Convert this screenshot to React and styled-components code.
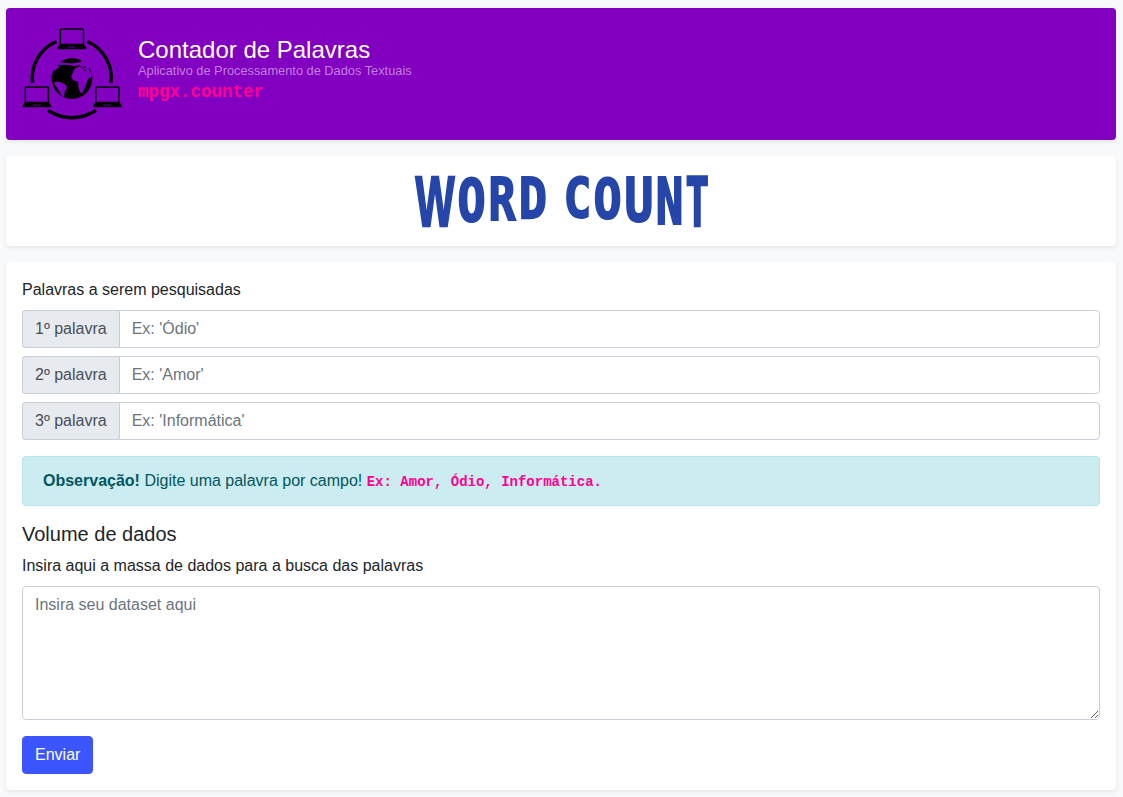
import React from "react";
import styled, { createGlobalStyle } from "styled-components";

const GlobalStyle = createGlobalStyle`
  *, *::before, *::after { box-sizing: border-box; }
  html { background: #f8f9fb; }
  body {
    margin: 0;
    background: #f8f9fb;
    color: #212529;
    font: 400 16px/24px "Liberation Sans", Arial, sans-serif;
  }
`;

const Page = styled.main`
  display: flex;
  flex-direction: column;
  gap: 16px;
  padding: 8px 7px 7px 6px;
`;

const Card = styled.section`
  padding: 16px;
  border-radius: 4px;
  background: #fff;
  box-shadow: 0 2px 4px rgba(0, 0, 0, 0.075);
`;

const Banner = styled(Card).attrs({ as: "header" })`
  display: flex;
  gap: 16px;
  height: 132px;
  background: #8200c0;
  color: #fff;
`;

const BannerText = styled.div`
  display: flex;
  flex-direction: column;
  padding-top: 11px;
`;

const AppName = styled.h1`
  margin: 0;
  font-size: 24px;
  font-weight: 400;
  line-height: 29px;
`;

const Tagline = styled.small`
  margin-bottom: 2px;
  font-size: 12.8px;
  line-height: 14px;
  color: #c17fdf;
`;

const Code = styled.code`
  font-family: "Liberation Mono", monospace;
  font-size: ${(p) => p.$size || "14px"};
  font-weight: 700;
  color: #ff0090;
`;

const LogoCard = styled(Card)`
  display: flex;
  justify-content: center;
  height: 90px;
`;

const LogoSvg = styled.svg`
  overflow: visible;
`;

const LogoLetter = styled.text`
  font: 700 60px ${(p) => p.$font || '"DejaVu Sans Mono"'}, sans-serif;
  fill: #2546a8;
  stroke: #2546a8;
  stroke-width: 2;
`;

const FormCard = styled(Card).attrs({ as: "form" })`
  display: flex;
  flex-direction: column;
  height: 528px;
`;

const Label = styled.label`
  margin-bottom: 8px;
  line-height: 24px;
`;

const Fields = styled.div`
  display: flex;
  flex-direction: column;
  gap: 8px;
`;

const InputGroup = styled.div`
  display: flex;
  height: 38px;
`;

const Addon = styled.span`
  padding: 6px 12px;
  border: 1px solid #c9cfd9;
  border-right: 0;
  border-radius: 4px 0 0 4px;
  background: #e7eaef;
  color: #495057;
  white-space: nowrap;
`;

const Input = styled.input`
  flex: 1;
  min-width: 0;
  padding: 6px 12px;
  border: 1px solid #c9cfd9;
  border-radius: 0 4px 4px 0;
  background: #fff;
  font: inherit;
  outline: 0;
  &::placeholder { color: #6c757d; opacity: 1; }
`;

const Notice = styled.div`
  height: 50px;
  margin: 16px 0;
  padding: 12px 20px;
  border: 1px solid #b6e5ea;
  border-radius: 4px;
  background: #cbecf0;
  color: #03565f;
`;

const Heading = styled.h2`
  margin: 0 0 8px;
  font-size: 20px;
  font-weight: 400;
  line-height: 24px;
`;

const TextArea = styled.textarea`
  height: 134px;
  padding: 6px 12px;
  border: 1px solid #c9cfd9;
  border-radius: 4px;
  background: #fff;
  font: inherit;
  outline: 0;
  resize: vertical;
  &::placeholder { color: #6c757d; opacity: 1; }
`;

const Submit = styled.button`
  align-self: flex-start;
  height: 38px;
  margin-top: 16px;
  padding: 6px 12px;
  border: 1px solid #3b55ff;
  border-radius: 4px;
  background: #3b55ff;
  color: #fff;
  font: inherit;
`;

const Laptop = ({ x, y }) => (
  <g transform={`translate(${x} ${y})`}>
    <rect x="3.3" y="1.1" width="23.2" height="15.4" rx="1" fill="none" stroke="#000" strokeWidth="1.5" />
    <path d="M3 16h24l2.5 4.2q0 1-1.2 1H1.5q-1.2 0-1.2-1z" />
    <path d="M10.5 18.2h8.5l-1.5 1.7h-5.5z" fill="#3c0059" />
  </g>
);

const NetworkIcon = () => (
  <svg width="100" height="100" viewBox="0 0 100 100" aria-hidden="true">
    <g fill="none" stroke="#000" strokeWidth="3.4">
      <path d="M10.5 59A40 40 0 0 1 34.5 17.5" />
      <path d="M65.5 17.5A40 40 0 0 1 89 59" />
      <path d="M26 86.5Q50 101 74 86.5" />
    </g>
    <Laptop x={35} y={4} />
    <Laptop x={0} y={62} />
    <Laptop x={70.5} y={62} />
    <circle cx="50" cy="54.5" r="20.4" />
    <g fill="#8200c0">
      <path d="M28 51q1-11 10-16l1 2-3 2 2 1.5-3 1 3 1-4 3-3 1.5-1 4z" />
      <path d="M37 37.5l5 1.5 9 .3 7-1 3-2 7 7-2 2-3-3-3 1-3-2-5 1-3-1-6-.5-5 .2-2-1.5z" />
      <path d="M34 57.8l5 .4 5 2.8 1 3-2 3-1 5-2 .5-3-6-3-4-2-4z" />
      <path d="M51.5 47l2-3.3 5-1 3 1.3 4-.5 3 4 1.3 5-3.8 3-2 5-2 5-1.5 3.5-2.5-.5-1.5-5-.5-6-4-.7-3-3z" />
    </g>
    <path d="M67 54l3 .3q-.5 7-4 11l-2.5 2.5 1-5zM61 45l3.5 1.3-1.5 1.3z" />
  </svg>
);

const ARIAL = '"Liberation Sans"';

// ink: horizontal extent of the glyph at 60px; round: how far curves pass the cap line and baseline
const LETTERS = [
  { char: "W", x: 4, width: 40, bottom: 55, ink: [-0.7, 57.3], font: ARIAL, cap: 43.3 },
  { char: "O", x: 48, width: 25, bottom: 51, ink: [2, 34.1], round: 0.9 },
  { char: "R", x: 80, width: 25, bottom: 48.5, ink: [3.3, 36.6] },
  { char: "D", x: 110, width: 24, bottom: 47.5, ink: [3, 33.7] },
  { char: "C", x: 154.5, width: 23, bottom: 47, ink: [2.7, 32.5], round: 0.9 },
  { char: "O", x: 184, width: 25, bottom: 48, ink: [2, 34.1], round: 0.9 },
  { char: "U", x: 216, width: 24, bottom: 50, ink: [3, 33.1] },
  { char: "N", x: 247, width: 23, bottom: 53, ink: [3, 33.1] },
  { char: "T", x: 275, width: 22.5, bottom: 55.5, ink: [0.8, 35.4] },
];

const WordLogo = () => (
  <LogoSvg width="300" height="58" viewBox="0 0 300 58" role="img" aria-label="Word Count">
    {LETTERS.map(({ char, x, width, bottom, ink, font, cap = 45.7, round = 0 }, i) => {
      const sx = width / (ink[1] - ink[0]);
      const sy = (bottom - 4) / (cap + 2 * round);
      return (
        <LogoLetter
          key={i}
          $font={font}
          transform={`matrix(${sx} 0 0 ${sy} ${x - ink[0] * sx} ${bottom - sy * (1 + round)})`}
        >
          {char}
        </LogoLetter>
      );
    })}
  </LogoSvg>
);

const WORDS = [
  { label: "1º palavra", hint: "Ex: 'Ódio'" },
  { label: "2º palavra", hint: "Ex: 'Amor'" },
  { label: "3º palavra", hint: "Ex: 'Informática'" },
];

export default function App() {
  return (
    <>
      <GlobalStyle />
      <Page>
        <Banner>
          <NetworkIcon />
          <BannerText>
            <AppName>Contador de Palavras</AppName>
            <Tagline>Aplicativo de Processamento de Dados Textuais</Tagline>
            <Code $size="17.5px">mpgx.counter</Code>
          </BannerText>
        </Banner>
        <LogoCard>
          <WordLogo />
        </LogoCard>
        <FormCard>
          <Label>Palavras a serem pesquisadas</Label>
          <Fields>
            {WORDS.map(({ label, hint }) => (
              <InputGroup key={label}>
                <Addon>{label}</Addon>
                <Input placeholder={hint} />
              </InputGroup>
            ))}
          </Fields>
          <Notice>
            <strong>Observação!</strong> Digite uma palavra por campo! <Code>Ex: Amor, Ódio, Informática.</Code>
          </Notice>
          <Heading>Volume de dados</Heading>
          <Label htmlFor="dataset">Insira aqui a massa de dados para a busca das palavras</Label>
          <TextArea id="dataset" placeholder="Insira seu dataset aqui" />
          <Submit type="button">Enviar</Submit>
        </FormCard>
      </Page>
    </>
  );
}
